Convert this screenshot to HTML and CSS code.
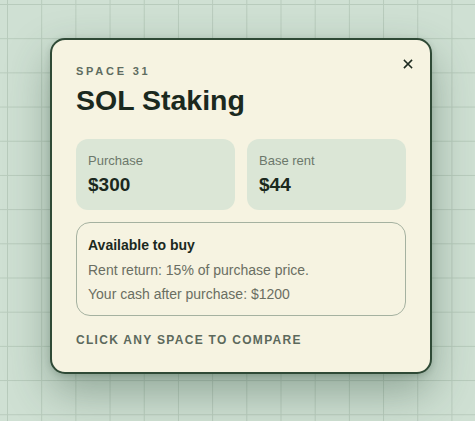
FILE: index.html
```html
<!DOCTYPE html>
<html lang="en">
<head>
  <meta charset="UTF-8">
  <title>SOL Staking</title>
  <link rel="stylesheet" href="styles.css">
</head>
<body>
  <div class="board">
    <div class="card">
      <button class="close" aria-label="Close">
        <svg width="10" height="10" viewBox="0 0 10 10"><path d="M1.5 1.5L8.5 8.5M8.5 1.5L1.5 8.5" stroke="#1d2a20" stroke-width="1.6" stroke-linecap="square"/></svg>
      </button>
      <div class="eyebrow">SPACE 31</div>
      <h1 class="title">SOL Staking</h1>
      <div class="stats">
        <div class="stat">
          <div class="stat-label">Purchase</div>
          <div class="stat-value">$300</div>
        </div>
        <div class="stat">
          <div class="stat-label">Base rent</div>
          <div class="stat-value">$44</div>
        </div>
      </div>
      <div class="info">
        <div class="info-title">Available to buy</div>
        <p class="info-line">Rent return: 15% of purchase price.</p>
        <p class="info-line">Your cash after purchase: $1200</p>
      </div>
      <div class="hint">CLICK ANY SPACE TO COMPARE</div>
    </div>
  </div>
</body>
</html>
```

FILE: styles.css
```css
html, body {
    margin: 0;
    height: 100%;
}
body {
    font-family: "Liberation Sans", Arial, sans-serif;
    background-color: #cfe0d3;
    background-image:
        linear-gradient(to right, #b8cbbc 1px, transparent 1px),
        linear-gradient(to bottom, #b8cbbc 1px, transparent 1px);
    background-size: 34.2px 34.2px;
    background-position: 7px 4px;
    overflow: hidden;
}
.board {
    padding: 38px 0 0 50px;
}
.card {
    position: relative;
    box-sizing: border-box;
    width: 382px;
    padding: 24px 24px 24px;
    background: #f6f3e1;
    border: 2px solid #2f4a36;
    border-radius: 15px;
    box-shadow: 0 18px 44px rgba(40, 72, 52, 0.38), 0 2px 6px rgba(40, 72, 52, 0.2);
}
.close {
    position: absolute;
    top: 12px;
    right: 10px;
    width: 24px;
    height: 24px;
    padding: 0;
    border: 0;
    background: none;
    display: flex;
    align-items: center;
    justify-content: center;
}
.eyebrow {
    font-size: 11px;
    line-height: 14px;
    font-weight: bold;
    letter-spacing: 2.75px;
    color: #5e6c5f;
}
.title {
    margin: 5px 0 22px;
    font-size: 28.5px;
    line-height: 34px;
    font-weight: bold;
    color: #1b291e;
}
.stats {
    display: grid;
    grid-template-columns: 1fr 1fr;
    gap: 12px;
}
.stat {
    background: #dbe6d6;
    border-radius: 12px;
    padding: 14px 12px 13px;
}
.stat-label {
    font-size: 13px;
    line-height: 16px;
    color: #6c786b;
    margin-bottom: 4px;
}
.stat-value {
    font-size: 19px;
    line-height: 24px;
    font-weight: bold;
    color: #1b291e;
}
.info {
    margin-top: 12px;
    border: 1px solid #a5b1a0;
    border-radius: 14px;
    padding: 12px 11px 9px;
}
.info-title {
    font-size: 14px;
    line-height: 20px;
    font-weight: bold;
    color: #1b291e;
    margin-bottom: 3px;
}
.info-line {
    margin: 0;
    font-size: 14px;
    line-height: 24px;
    color: #6a6e62;
}
.hint {
    margin-top: 16px;
    font-size: 12px;
    line-height: 16px;
    font-weight: bold;
    letter-spacing: 1.3px;
    color: #5c695c;
}
```
